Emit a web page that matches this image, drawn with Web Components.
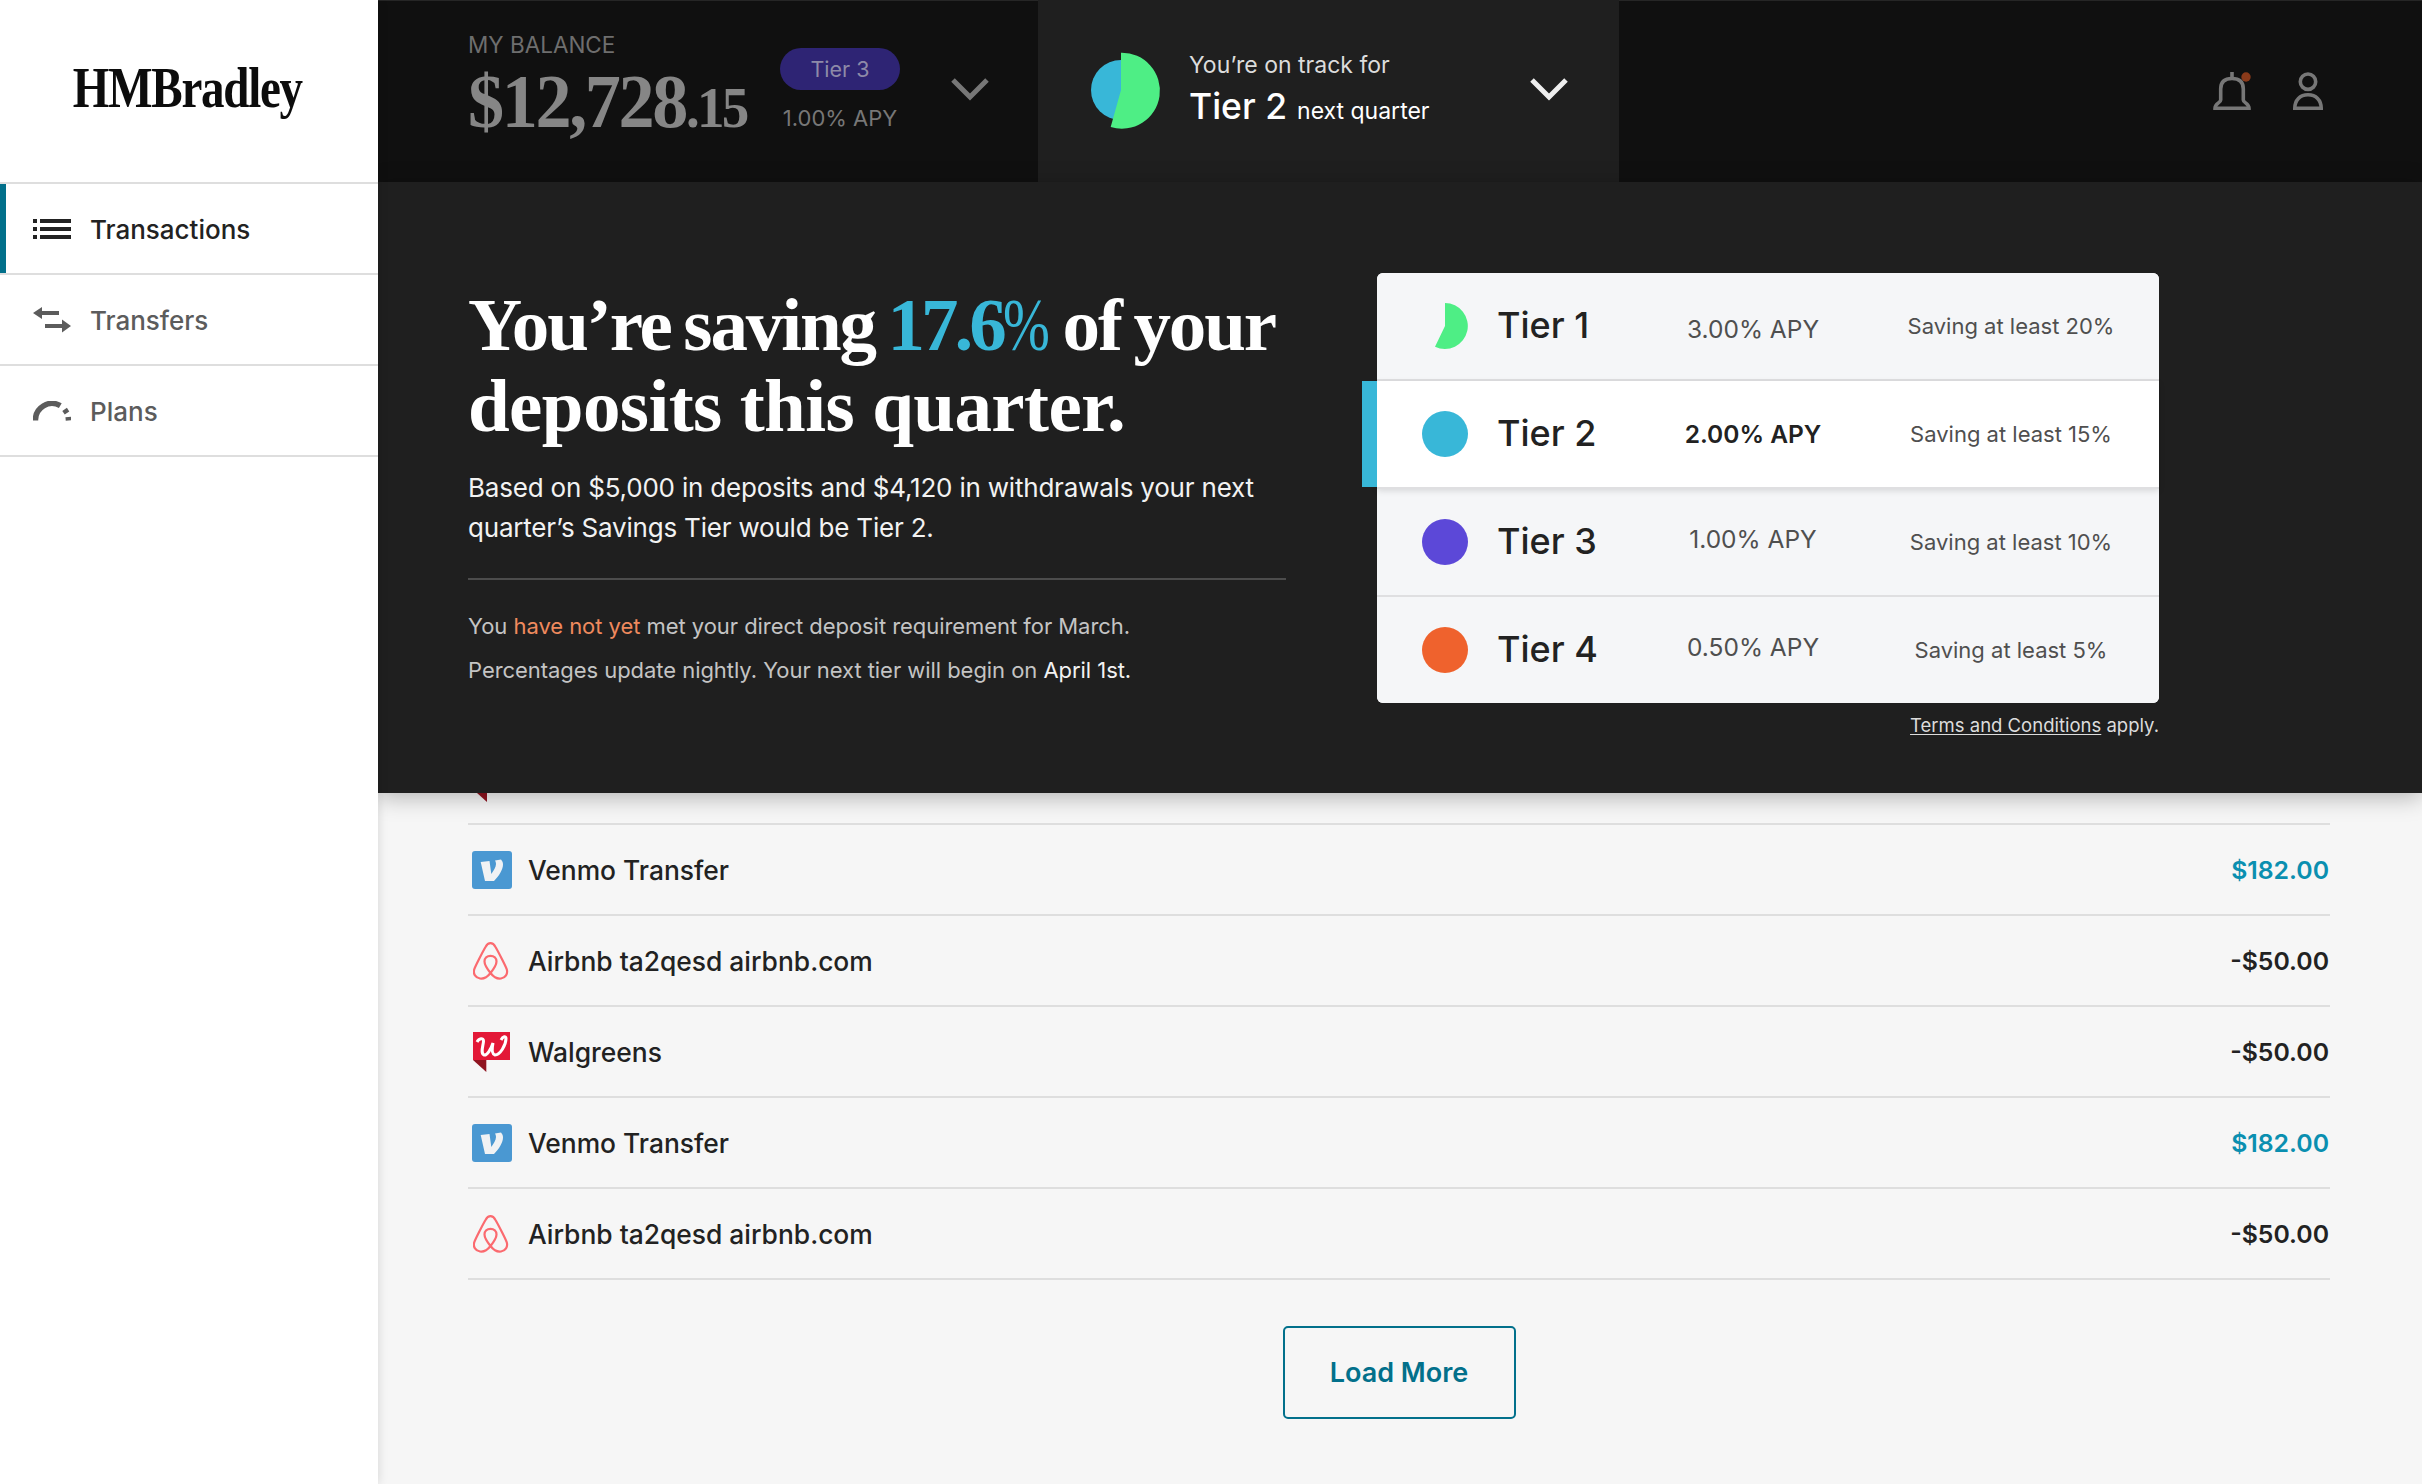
<!DOCTYPE html>
<html>
<head>
<meta charset="utf-8">
<title>HMBradley</title>
<style>
  html, body { margin: 0; height: 100%; }
  body { width: 2422px; height: 1484px; overflow: hidden; background: #f6f6f6; font-family: Inter, "Liberation Sans", sans-serif; }
</style>
</head>
<body>
<hmb-app></hmb-app>

<script>
const ICONS = {
  list: `<svg width="38" height="20" viewBox="0 0 38 20"><g fill="#222"><rect x="0" y="0" width="4" height="4"/><rect x="0" y="8" width="4" height="4"/><rect x="0" y="16" width="4" height="4"/><rect x="7" y="0" width="31" height="4"/><rect x="7" y="8" width="31" height="4"/><rect x="7" y="16" width="31" height="4"/></g></svg>`,
  transfer: `<svg width="38" height="26" viewBox="0 0 38 26"><g fill="#5c5c5c"><path d="M0 6 9 0v4h17v4H9v4z"/><path d="M38 19l-9-6.500V17H12v4h17v4.500z"/></g></svg>`,
  plans: `<svg width="38" height="20" viewBox="0 0 38 20" fill="none" stroke="#5c5c5c" stroke-width="5.500"><path d="M2.500 19.500A16.500 16.500 0 0 1 27.300 4.700"/><path d="M31.600 8.400L34 12"/><path d="M35.200 16.100L35.500 19.500"/></svg>`,
  venmo: `<svg width="40" height="38" viewBox="0 0 40 38"><rect width="40" height="38" rx="3" fill="#4a98d2"/><path d="M8.700 11l8.800-1 1.800 13C21.500 20 24 16 24 13c0-1.500-.5-2.500-1-3.500l6-1c1.300 1.500 2 3 2 5 0 5-4 11.500-9 16.500h-9z" fill="#f0f2f4"/></svg>`,
  airbnb: `<svg width="36" height="38" viewBox="0 0 36 38" fill="none" stroke="#fb6a6f" stroke-width="2.200" style="margin-left:1px"><path d="M17.500 31C14 35.500 10 37 7 36.500 2.500 35.800 0 32 1.200 27.500 2 25 9 11 12.500 5 14 2.200 15.500 1.200 17.500 1.200S21 2.200 22.500 5C26 11 33 25 33.800 27.500 35 32 32.500 35.800 28 36.500 25 37 21 35.500 17.500 31z"/><path d="M17.500 31C13.500 26 11.500 22.500 11.500 19.500 11.500 16 14 13.800 17.500 13.800S23.500 16 23.500 19.500C23.500 22.500 21.500 26 17.500 31z"/></svg>`,
  walgreens: `<svg width="38" height="40" viewBox="0 0 38 40" style="margin-left:1px"><path d="M0 0h37v28H0z" fill="#e31837"/><path d="M0 28h13.300v12z" fill="#8f1420"/><path d="M4 10C6 6 10.500 5.500 10.500 9 10.500 13 7 21 11 23 14 24 18 17 20 11 19 16 18 22 22 23 27 23 33 13 33 6.500 33 4 30 4 28 8" fill="none" stroke="#fff" stroke-width="3"/></svg>`
};

const TIERS = [
  { name: 'Tier 1', apy: '3.00% APY', note: 'Saving at least 20%', pie: true, nudge: 'margin-top:6px' },
  { name: 'Tier 2', apy: '2.00% APY', note: 'Saving at least 15%', colour: '#38b7d8', current: true, nudge: '' },
  { name: 'Tier 3', apy: '1.00% APY', note: 'Saving at least 10%', colour: '#5c48d8', nudge: 'margin-bottom:6px' },
  { name: 'Tier 4', apy: '0.50% APY', note: 'Saving at least 5%', colour: '#ef622d', nudge: 'margin-bottom:6px' }
];

const ROWS = [
  { icon: 'venmo', name: 'Venmo Transfer', amount: '$182.00', credit: true },
  { icon: 'airbnb', name: 'Airbnb ta2qesd airbnb.com', amount: '-$50.00' },
  { icon: 'walgreens', name: 'Walgreens', amount: '-$50.00' },
  { icon: 'venmo', name: 'Venmo Transfer', amount: '$182.00', credit: true },
  { icon: 'airbnb', name: 'Airbnb ta2qesd airbnb.com', amount: '-$50.00' }
];

class BaseEl extends HTMLElement {
  constructor() {
    super();
    this.attachShadow({ mode: 'open' });
  }
}

class HmbNavItem extends BaseEl {
  connectedCallback() {
    const active = this.hasAttribute('active');
    this.shadowRoot.innerHTML = `
      <style>
        :host { display: flex; align-items: center; height: 89px; border-bottom: 2px solid #dedede; position: relative; font-size: 26px; font-weight: 500; color: ${active ? '#222' : '#5c5c5c'}; }
        .bar { position: absolute; left: 0; top: 0; bottom: 0; width: 6px; background: ${active ? '#02708b' : 'transparent'}; }
        .icon { width: 38px; margin-left: 33px; margin-right: 19px; display: flex; align-items: center; justify-content: center; }
        .text { padding-top: 2px; }
        svg { display: block; }
      </style>
      <span class="bar"></span>
      <span class="icon">${ICONS[this.getAttribute('icon')]}</span>
      <span class="text"><slot></slot></span>
    `;
  }
}

class HmbSidebar extends BaseEl {
  connectedCallback() {
    this.shadowRoot.innerHTML = `
      <style>
        :host { display: block; width: 378px; flex: none; background: #fff; box-shadow: 0 0 10px rgba(0,0,0,.14); position: relative; z-index: 3; }
        .logo { border-bottom: 2px solid #dedede; display: flex; align-items: center; justify-content: center; padding-right: 4px; padding-bottom: 7px; box-sizing: border-box; height: 184px; }
        .logo span { display: block; font-family: "Liberation Serif", serif; font-size: 56px; font-weight: 700; color: #0c0c0c; letter-spacing: -1.500px; transform: scaleX(.84); }
      </style>
      <div class="logo"><span>HMBradley</span></div>
      <hmb-nav-item icon="list" active>Transactions</hmb-nav-item>
      <hmb-nav-item icon="transfer">Transfers</hmb-nav-item>
      <hmb-nav-item icon="plans">Plans</hmb-nav-item>
    `;
  }
}

class HmbTopbar extends BaseEl {
  connectedCallback() {
    this.shadowRoot.innerHTML = `
      <style>
        :host { display: flex; height: 182px; background: #101010; color: #808080; box-shadow: inset 0 1px 0 #262626; }
        .balance { width: 660px; flex: none; box-sizing: border-box; padding: 30px 0 0 90px; display: flex; position: relative; }
        .label { font-size: 22.500px; line-height: 30px; color: #6e6e6e; }
        .amount { font-family: "Liberation Serif", serif; font-weight: 700; font-size: 76px; line-height: 72px; margin-top: 5px; letter-spacing: -2.500px; white-space: nowrap; color: #868686; transform: scaleX(.95); transform-origin: left; }
        .amount small { font-size: 58px; letter-spacing: -3px; }
        .tier { position: absolute; left: 402px; top: 48px; width: 120px; text-align: center; }
        .pill { background: #2e2474; border-radius: 21px; height: 42px; line-height: 42px; font-size: 21.500px; color: #8d8aa8; }
        .apy { margin-top: 13px; font-size: 22px; line-height: 30px; white-space: nowrap; color: #777; }
        .chevron { position: absolute; }
        .track { width: 581px; flex: none; background: #1f1f1f; display: flex; align-items: center; position: relative; box-sizing: border-box; padding-left: 51px; }
        .pie { margin-top: -2px; }
        .track-text { margin-left: 28px; color: #dcdcdc; font-size: 23px; }
        .line1 { line-height: 30px; margin-top: -2px; }
        .line2 { color: #fff; display: flex; align-items: baseline; margin-top: 7px; line-height: 40px; }
        .line2 b { font-size: 35.500px; font-weight: 500; margin-right: 10px; }
        .actions { flex: 1; display: flex; justify-content: flex-end; align-items: center; gap: 42px; padding-right: 99px; }
        svg { display: block; overflow: visible; }
      </style>
      <div class="balance">
        <div>
          <div class="label">MY BALANCE</div>
          <div class="amount">$12,728<small>.15</small></div>
        </div>
        <div class="tier">
          <div class="pill">Tier 3</div>
          <div class="apy">1.00% APY</div>
        </div>
        <svg class="chevron" style="left:573px;top:77px" width="38" height="24" viewBox="0 0 38 24" fill="none" stroke="#777" stroke-width="5"><path d="M2 3l17 17L36 3"/></svg>
      </div>
      <div class="track">
        <svg class="pie" width="72" height="80" viewBox="0 0 72 80">
          <circle cx="32" cy="40" r="30" fill="#38b7d8"/>
          <path d="M32 2.700A38 38 0 1 1 21.700 77L32 40z" fill="#4eee85"/>
        </svg>
        <div class="track-text">
          <div class="line1">You’re on track for</div>
          <div class="line2"><b>Tier 2</b><span>next quarter</span></div>
        </div>
        <svg class="chevron" style="left:492px;top:77px" width="38" height="24" viewBox="0 0 38 24" fill="none" stroke="#eee" stroke-width="5"><path d="M2 3l17 17L36 3"/></svg>
      </div>
      <div class="actions">
        <svg width="38" height="38" viewBox="0 0 38 38" fill="none" stroke="#777" stroke-width="3.600">
          <path d="M19 0V6"/>
          <path d="M7.700 28V17C7.700 10 12 6.500 19 6.500S30.300 10 30.300 17V28C30.300 31 36 31 36 36.200H2C2 31 7.700 31 7.700 28z"/>
          <circle cx="33" cy="5" r="4.700" fill="#8a3a1a" stroke="none"/>
        </svg>
        <svg width="30" height="38" viewBox="0 0 30 38" fill="none" stroke="#777" stroke-width="3.600">
          <circle cx="15" cy="9.700" r="7.700"/>
          <path d="M1.800 36.200C1.800 28 7 22.800 15 22.800S28.200 28 28.200 36.200z"/>
        </svg>
      </div>
    `;
  }
}

class HmbTierRow extends BaseEl {
  connectedCallback() {
    const t = this.tier;
    const dot = t.pie
      ? `<svg width="46" height="46" viewBox="0 0 46 46"><path d="M23 0A23 23 0 1 1 13 43.800L23 23z" fill="#4eee85"/></svg>`
      : `<svg width="46" height="46" viewBox="0 0 46 46"><circle cx="23" cy="23" r="23" fill="${t.colour}"/></svg>`;
    this.shadowRoot.innerHTML = `
      <style>
        :host { display: grid; grid-template-columns: 76px 155px 200px 1fr; align-items: center; height: 106px; border-bottom: 2px solid #dfdfe1; background: ${t.current ? '#fff' : '#f5f6f8'}; position: relative; color: #4f4f4f; padding-left: 45px; ${t.current ? 'z-index: 1; box-shadow: 0 2px 6px rgba(0,0,0,.12);' : ''} }
        :host(:last-child) { border-bottom: 0; }
        svg { display: block; }
        .name { font-size: 36px; font-weight: 500; color: #222; line-height: 46px; margin-bottom: 2px; margin-left: -1px; }
        .apy { text-align: center; white-space: nowrap; font-size: 24.500px; font-weight: ${t.current ? 600 : 400}; color: ${t.current ? '#222' : '#4f4f4f'}; ${t.nudge} }
        .note { padding-left: 10px; text-align: center; white-space: nowrap; font-size: 22px; }
        .mark { display: ${t.current ? 'block' : 'none'}; position: absolute; left: -15px; top: 0; bottom: 0; width: 15px; background: #38b7d8; }
      </style>
      <span class="mark"></span>
      <span class="dot">${dot}</span>
      <span class="name">${t.name}</span>
      <span class="apy">${t.apy}</span>
      <span class="note">${t.note}</span>
    `;
  }
}

class HmbTierCard extends BaseEl {
  connectedCallback() {
    this.shadowRoot.innerHTML = `
      <style>
        :host { display: block; width: 782px; flex: none; }
        .card { border-radius: 6px; position: relative; background: #f5f6f8; }
        .terms { margin-top: 11px; text-align: right; font-size: 18.500px; line-height: 22px; color: #dcdcdc; }
        .terms u { text-underline-offset: 2px; }
      </style>
      <div class="card"></div>
      <div class="terms"><u>Terms and Conditions</u> apply.</div>
    `;
    const card = this.shadowRoot.querySelector('.card');
    TIERS.forEach(t => {
      const row = document.createElement('hmb-tier-row');
      row.tier = t;
      card.appendChild(row);
    });
    card.firstChild.style.borderRadius = '6px 6px 0 0';
    card.lastChild.style.borderRadius = '0 0 6px 6px';
  }
}

class HmbHero extends BaseEl {
  connectedCallback() {
    this.shadowRoot.innerHTML = `
      <style>
        :host { display: flex; height: 611px; background: #1f1f1f; color: #fff; padding: 91px 0 0 90px; box-sizing: border-box; gap: 91px; box-shadow: 0 4px 22px rgba(0,0,0,.28); position: relative; z-index: 2; }
        .copy { width: 818px; flex: none; padding-top: 11px; }
        h1 { margin: 0; font-family: "Liberation Serif", serif; font-weight: 700; font-size: 75px; line-height: 81px; letter-spacing: -2.100px; word-spacing: -4px; white-space: nowrap; }
        h1 span { color: #38b7d8; letter-spacing: -4px; }
        h1 i { display: inline-block; width: 47px; font-style: normal; font-weight: 400; letter-spacing: 0; transform: scaleX(.75); transform-origin: left; }
        h1 em { font-style: normal; letter-spacing: -.6px; word-spacing: 0; }
        .lead { margin: 22px 0 0; font-size: 26px; line-height: 40px; color: #f2f2f2; letter-spacing: -.2px; white-space: nowrap; }
        hr { border: 0; border-top: 2px solid #4c4c4c; margin: 30px 0 0; }
        .small { font-size: 22px; line-height: 44px; color: #c4c4c4; letter-spacing: -.05px; white-space: nowrap; }
        .small.first { margin-top: 24px; }
        .warn { color: #ef8a5e; }
        .hi { color: #f2f2f2; }
      </style>
      <div class="copy">
        <h1>You’re saving <span>17.6<i>%</i></span> of your<br><em>deposits this quarter.</em></h1>
        <p class="lead">Based on $5,000 in deposits and $4,120 in withdrawals your next<br>quarter’s Savings Tier would be Tier 2.</p>
        <hr>
        <div class="small first">You <span class="warn">have not yet</span> met your direct deposit requirement for March.</div>
        <div class="small">Percentages update nightly. Your next tier will begin on <span class="hi">April 1st.</span></div>
      </div>
      <hmb-tier-card></hmb-tier-card>
    `;
  }
}

class HmbTxRow extends BaseEl {
  connectedCallback() {
    const d = this.data;
    this.shadowRoot.innerHTML = `
      <style>
        :host { display: flex; align-items: center; height: 89px; border-bottom: 2px solid #dedede; font-size: 26.400px; font-weight: 500; color: #222; }
        .icon { width: 56px; padding-left: 4px; display: flex; flex: none; }
        .name { flex: 1; }
        .amount { color: ${d.credit ? '#0a8fb0' : '#222'}; font-size: 24.800px; font-weight: 600; padding-right: 1px; }
        svg { display: block; }
      </style>
      <span class="icon">${ICONS[d.icon]}</span>
      <span class="name">${d.name}</span>
      <span class="amount">${d.amount}</span>
    `;
  }
}

class HmbTxList extends BaseEl {
  connectedCallback() {
    this.shadowRoot.innerHTML = `
      <style>
        :host { display: block; margin: 0 92px 0 90px; position: relative; }
        .first { height: 30px; border-bottom: 2px solid #dedede; position: relative; }
        .tail { position: absolute; left: 9px; top: 0; width: 0; height: 0; border-left: 10px solid transparent; border-top: 9px solid #8f1420; }
        .more { display: flex; justify-content: center; margin-top: 46px; }
        button { width: 233px; height: 93px; box-sizing: border-box; background: transparent; border: 2px solid #02708b; border-radius: 5px; color: #02708b; font: 600 27px Inter, "Liberation Sans", sans-serif; }
      </style>
      <div class="first"><span class="tail"></span></div>
      <div class="rows"></div>
      <div class="more"><button>Load More</button></div>
    `;
    const rows = this.shadowRoot.querySelector('.rows');
    ROWS.forEach(r => {
      const row = document.createElement('hmb-tx-row');
      row.data = r;
      rows.appendChild(row);
    });
  }
}

class HmbApp extends BaseEl {
  connectedCallback() {
    this.shadowRoot.innerHTML = `
      <style>
        :host { display: flex; height: 1484px; width: 2422px; overflow: hidden; background: #f6f6f6; }
        main { flex: 1; min-width: 0; }
      </style>
      <hmb-sidebar></hmb-sidebar>
      <main>
        <hmb-topbar></hmb-topbar>
        <hmb-hero></hmb-hero>
        <hmb-tx-list></hmb-tx-list>
      </main>
    `;
  }
}

customElements.define('hmb-nav-item', HmbNavItem);
customElements.define('hmb-sidebar', HmbSidebar);
customElements.define('hmb-topbar', HmbTopbar);
customElements.define('hmb-tier-row', HmbTierRow);
customElements.define('hmb-tier-card', HmbTierCard);
customElements.define('hmb-hero', HmbHero);
customElements.define('hmb-tx-row', HmbTxRow);
customElements.define('hmb-tx-list', HmbTxList);
customElements.define('hmb-app', HmbApp);
</script>
</body>
</html>
